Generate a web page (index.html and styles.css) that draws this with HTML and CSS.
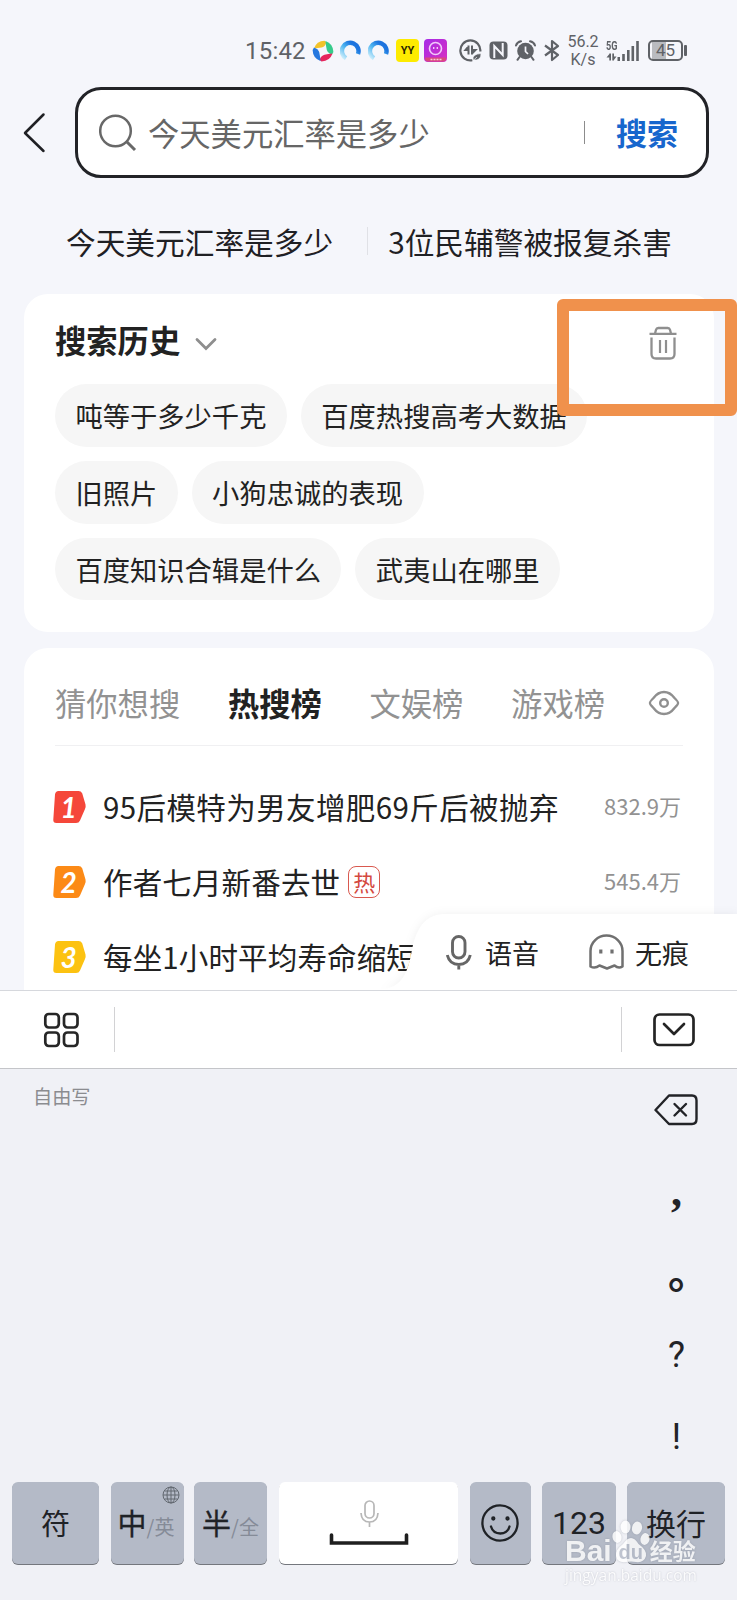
FILE: index.html
```html
<!DOCTYPE html>
<html lang="zh-CN">
<head>
<meta charset="utf-8">
<title>搜索</title>
<link rel="stylesheet" href="styles.css">
</head>
<body>
<div class="screen">
  <header class="status">
    <span class="clock">15:42</span>
    <svg class="s-swirl" width="22" height="22" viewBox="0 0 22 22">
      <path d="M2 8.500Q4.500 1 12.500 .800L14.500 2.200Q13 7 9.500 7.500T2 8.500Z" fill="#f3c32a"/>
      <path d="M13.500 1Q21 3.500 21.400 12L20 14.500Q15.500 13 14.700 9.500T13.500 1Z" fill="#36cb8b"/>
      <path d="M20.500 13.500Q18 21 9.500 21.400L7.500 20Q9 15.500 12.500 14.700T20.500 13.500Z" fill="#e5265c"/>
      <path d="M8.500 21Q1 18.500 .600 10L2 7.500Q6.500 9 7.300 12.500T8.500 21Z" fill="#2578df"/>
    </svg>
    <svg class="s-ring" width="21" height="21" viewBox="0 0 21 21">
      <defs><linearGradient id="ring" x1="0" y1="1" x2="1" y2="0"><stop offset="0" stop-color="#d5f1fc"/><stop offset=".45" stop-color="#4db4f0"/><stop offset=".75" stop-color="#1d76e0"/><stop offset="1" stop-color="#1d6fdc"/></linearGradient></defs>
      <path d="M6 18.200A8.300 8.300 0 1 1 18 14" fill="none" stroke="url(#ring)" stroke-width="4.500"/>
    </svg>
    <svg class="s-ring" width="21" height="21" viewBox="0 0 21 21"><path d="M6 18.200A8.300 8.300 0 1 1 18 14" fill="none" stroke="url(#ring)" stroke-width="4.500"/></svg>
    <span class="yy">YY</span>
    <svg class="s-app" width="23" height="23" viewBox="0 0 23 23">
      <defs><linearGradient id="app" x1="0" y1="0" x2="1" y2="1"><stop offset="0" stop-color="#a52be8"/><stop offset="1" stop-color="#d92fc0"/></linearGradient></defs>
      <rect width="23" height="23" rx="4" fill="url(#app)"/>
      <path d="M1 18.500H22V19Q22 22.500 19 22.500H4Q1 22.500 1 19Z" fill="#d84a7d"/>
      <path d="M6.500 20.500H18" stroke="#f6c9d9" stroke-width="1.500" stroke-dasharray="2 1"/>
      <circle cx="11.500" cy="9.500" r="6" fill="none" stroke="#f2c9fb" stroke-width="1.600"/>
      <path d="M9.700 8V10M13.300 8V10" stroke="#f2c9fb" stroke-width="1.400"/>
    </svg>
    <svg class="s-data" width="23" height="23" viewBox="0 0 23 23">
      <path d="M21.300 12.500A10 10 0 1 0 13.500 21.200" fill="none" stroke="#5f6267" stroke-width="2.200"/>
      <path d="M9.500 6.500V15.500M9.500 7.500L6.500 11H9.500M13 15.500V6.500M13 14.500L16.500 11H13" stroke="#5f6267" stroke-width="2" fill="#5f6267"/>
      <path d="M14 21Q13 15 22 14.500Q22.500 22 14 21ZM13 22.500L18 18" fill="#5f6267" stroke="#f5f6fb" stroke-width=".7"/>
    </svg>
    <svg class="s-nfc" width="19" height="19" viewBox="0 0 19 19">
      <rect x=".5" y=".5" width="18" height="18" rx="4" fill="#5f6267"/>
      <path d="M5.300 17V5L13.700 14V2" fill="none" stroke="#f5f6fb" stroke-width="2"/>
    </svg>
    <svg class="s-alarm" width="21" height="21" viewBox="0 0 21 21">
      <circle cx="10.500" cy="11" r="8.300" fill="#5f6267"/>
      <path d="M1 5.500Q2 2 6 1.300M20 5.500Q19 2 15 1.300M4.500 17L2.500 19.800M16.500 17L18.500 19.800" stroke="#5f6267" stroke-width="2" stroke-linecap="round" fill="none"/>
      <path d="M10.500 6.500V11.500L13 14" fill="none" stroke="#f5f6fb" stroke-width="1.700"/>
    </svg>
    <svg class="s-bt" width="17" height="23" viewBox="0 0 17 23" fill="none" stroke="#5f6267" stroke-width="2.200" stroke-linejoin="round">
      <path d="M2 6.500L15 16L9 21V2L15 7L2 16.500"/>
    </svg>
    <span class="speed"><span>56.2</span><span>K/s</span></span>
    <span class="net"><span class="net-label">5G</span>
      <svg width="34" height="22" viewBox="0 0 34 22" fill="#5f6267">
        <path d="M3.300 13.500H5V20.500H3.300ZM.500 17.500L3.800 13.500V17.500ZM6.300 13.500H8V20.500H6.300ZM7.500 20.500V16.500H10.500Z"/>
        <rect x="11.500" y="17" width="2.500" height="4"/><rect x="16.200" y="14" width="2.600" height="7"/><rect x="21" y="10" width="2.600" height="11"/><rect x="25.500" y="6" width="2.600" height="15"/><rect x="30.200" y="1" width="2.600" height="20"/>
      </svg>
    </span>
    <span class="battery"><span class="cell">45</span><span class="tip"></span></span>
  </header>

  <div class="search-row">
    <svg class="back" width="24" height="42" viewBox="0 0 24 42" fill="none" stroke="#1f2024" stroke-width="2.500" stroke-linecap="round" stroke-linejoin="round"><path d="M21.500 2.500L3 21L21.500 39"/></svg>
    <div class="search-box">
      <svg class="lens" width="38" height="38" viewBox="0 0 38 38" fill="none" stroke="#686868" stroke-width="2.500"><circle cx="16.500" cy="17" r="15.300"/><path d="M27.500 27.500L36 36" stroke-width="3"/></svg>
      <span class="query">今天美元汇率是多少</span>
      <span class="bar"></span>
      <span class="go">搜索</span>
    </div>
  </div>

  <div class="hints">
    <span>今天美元汇率是多少</span>
    <i class="hint-sep"></i>
    <span>3位民辅警被报复杀害</span>
  </div>

  <section class="card history">
    <div class="history-head">
      <h2>搜索历史</h2>
      <svg class="chev" width="22" height="14" viewBox="0 0 22 14" fill="none" stroke="#8e8e8e" stroke-width="2.800" stroke-linecap="round"><path d="M2 2.500L11 11.500L20 2.500"/></svg>
      <svg class="trash" width="28" height="34" viewBox="0 0 28 34" fill="none" stroke="#8f8f8f" stroke-width="2.300"><path d="M.500 7.800H27.500M6 7.500L7 3.800Q7.500 2 9.300 2H18.700Q20.500 2 21 3.800L22 7.500M2.500 11.500V28Q2.500 32.500 7 32.500H21Q25.500 32.500 25.500 28V11.500"/><path d="M11 14V27M17 14V27" stroke-width="2.200"/></svg>
    </div>
    <div class="chips">
      <span class="chip">吨等于多少千克</span><span class="chip">百度热搜高考大数据</span>
      <span class="chip">旧照片</span><span class="chip">小狗忠诚的表现</span>
      <span class="chip">百度知识合辑是什么</span><span class="chip">武夷山在哪里</span>
    </div>
    <div class="highlight"></div>
  </section>

  <section class="card board">
    <nav class="tabs">
      <span>猜你想搜</span><span class="on">热搜榜</span><span>文娱榜</span><span>游戏榜</span>
      <svg width="32" height="26" viewBox="0 0 32 26" fill="none" stroke="#8f8f8f" stroke-width="2.400"><path d="M2 13Q1.500 12 5.500 8Q10 2 16 2T26.500 8Q30.500 12 30 13Q30.500 14 26.500 18Q22 24 16 24T5.500 18Q1.500 14 2 13Z"/><circle cx="16" cy="13" r="3.800"/></svg>
    </nav>
    <ol class="ranks">
      <li>
        <span class="no"><svg width="34" height="32" viewBox="0 0 34 32"><path d="M5.500 0H25.500Q28 0 29.200 2.200L32.500 13.500Q33 16 32 18L27 29.500Q26 32 23 32H3.500Q0 32 .300 28.500L2 3.500Q2.500 0 5.500 0Z" fill="#f5473a"/></svg><b>1</b></span>
        <span class="topic first">95后模特为男友增肥69斤后被抛弃</span><span class="count">832.9万</span>
      </li>
      <li>
        <span class="no"><svg width="34" height="32" viewBox="0 0 34 32"><path d="M5.500 0H25.500Q28 0 29.200 2.200L32.500 13.500Q33 16 32 18L27 29.500Q26 32 23 32H3.500Q0 32 .300 28.500L2 3.500Q2.500 0 5.500 0Z" fill="#fc8a16"/></svg><b>2</b></span>
        <span class="topic">作者七月新番去世</span><span class="hot">热</span><span class="count">545.4万</span>
      </li>
      <li>
        <span class="no"><svg width="34" height="32" viewBox="0 0 34 32"><path d="M5.500 0H25.500Q28 0 29.200 2.200L32.500 13.500Q33 16 32 18L27 29.500Q26 32 23 32H3.500Q0 32 .300 28.500L2 3.500Q2.500 0 5.500 0Z" fill="#fcc211"/></svg><b>3</b></span>
        <span class="topic">每坐1小时平均寿命缩短</span>
      </li>
    </ol>
  </section>

  <div class="float">
    <svg class="float-bg" width="357" height="86" viewBox="0 0 357 86"><path d="M0 86C24 84 28 66 32 46C37 20 48 10 66 10H357V86Z" fill="#fff"/></svg>
    <svg class="mic" width="26" height="35" viewBox="0 0 26 35" fill="none" stroke="#666" stroke-width="2.900"><rect x="6.500" y="1.500" width="12.500" height="21.500" rx="6.250"/><path d="M1.300 20Q3.500 29.500 12.800 29.500T24.300 20M12.800 29.500V34.500"/></svg>
    <span class="float-voice">语音</span>
    <svg class="ghost" width="35" height="36" viewBox="0 0 35 36" fill="none" stroke="#707070" stroke-width="2.500" stroke-linejoin="round"><path d="M1.500 32.500V17A16 15.500 0 0 1 33.500 17V32.500Q29.500 35 25.500 31.500L18 34.500L10.500 31.500Q6 35 1.500 32.500Z"/><path d="M11.800 15.500V19.500M23 15.500V19.500" stroke-width="3.200"/></svg>
    <span>无痕</span>
  </div>

  <div class="toolbar">
    <svg class="grid" width="36" height="36" viewBox="0 0 36 36" fill="none" stroke="#262626" stroke-width="2.700"><rect x="2.300" y="2" width="13.500" height="13.500" rx="3.500"/><rect x="21" y="2" width="13.500" height="13.500" rx="3.500"/><rect x="2.300" y="20.500" width="13.500" height="13.500" rx="3.500"/><rect x="21" y="20.500" width="13.500" height="13.500" rx="3.500"/></svg>
    <i class="tool-sep left"></i>
    <i class="tool-sep right"></i>
    <svg class="fold" width="42" height="34" viewBox="0 0 42 34" fill="none" stroke="#242424" stroke-width="2.700" stroke-linecap="round" stroke-linejoin="round"><rect x="1.500" y="1.500" width="39" height="30.500" rx="5"/><path d="M11 11L21 21L31 11"/></svg>
  </div>

  <div class="keyboard">
    <div class="writing">
      <span class="mode">自由写</span>
      <div class="side">
        <svg width="45" height="32" viewBox="0 0 45 32" fill="none" stroke="#222327" stroke-width="2.400" stroke-linecap="round" stroke-linejoin="round"><path d="M15 1.500H38Q42.500 1.500 42.500 6.500V25Q42.500 30 38 30H15L1.500 16Z"/><path d="M20.500 10L32 21.500M32 10L20.500 21.500"/></svg>
        <span class="mark comma">,</span>
        <span class="mark stop">。</span>
        <span class="mark ask">?</span>
        <span class="mark bang">!</span>
      </div>
    </div>
    <div class="keys">
      <span class="key sym">符</span>
      <span class="key lang">中<small>/英</small>
        <svg class="globe" width="18" height="18" viewBox="0 0 18 18" fill="none" stroke="#626870" stroke-width="1"><circle cx="9" cy="9" r="8"/><ellipse cx="9" cy="9" rx="4" ry="8"/><path d="M9 1V17M1 9H17M2.500 5H15.500M2.500 13H15.500"/></svg>
      </span>
      <span class="key width">半<small>/全</small></span>
      <span class="key space">
        <svg width="80" height="47" viewBox="0 0 80 47" fill="none"><rect x="36" y="1" width="9" height="17" rx="4.500" stroke="#b7b7b7" stroke-width="1.700"/><path d="M32 13Q32.500 22 40.500 22T49 13M40.500 22V27" stroke="#b7b7b7" stroke-width="1.700"/><path d="M2.500 35V43H77.500V35" stroke="#1f1f1f" stroke-width="3.600" stroke-linecap="round"/></svg>
      </span>
      <span class="key smile">
        <svg width="39" height="39" viewBox="0 0 39 39" fill="none" stroke="#1f2226" stroke-width="2.300"><circle cx="19" cy="19" r="17.600"/><path d="M10 22.500Q12 29.500 19.300 29.500T28.500 22.500" stroke-linecap="round"/><circle cx="12.300" cy="14.500" r="1" /><circle cx="26.500" cy="14.500" r="1"/></svg>
      </span>
      <span class="key num">123</span>
      <span class="key enter">换行</span>
    </div>
  </div>

  <div class="watermark">
    <div class="brand"><span>Bai</span>
      <span class="paw"><svg width="38" height="43" viewBox="0 0 38 43" fill="#fff"><ellipse cx="5" cy="17" rx="4.500" ry="6" transform="rotate(-12 5 17)"/><ellipse cx="13.500" cy="7" rx="5" ry="6.500"/><ellipse cx="25" cy="8" rx="5" ry="6.500" transform="rotate(12 25 8)"/><ellipse cx="33" cy="19" rx="4.500" ry="6" transform="rotate(12 33 19)"/><path d="M19 18Q23 18 26.500 24Q35 30 34 36Q32 43 24 42Q19 41 14 42Q5 43 4 36Q3 30 11 24Q15 18 19 18Z"/></svg><em>du</em></span>
      <span class="jy">经验</span></div>
    <div class="site">jingyan.baidu.com</div>
  </div>
</div>
</body>
</html>
```
FILE: styles.css
```css
* { box-sizing: border-box; }
body { margin: 0; background: #f5f6fb; }
.screen {
  position: relative;
  display: flex;
  flex-direction: column;
  width: 737px;
  height: 1600px;
  overflow: hidden;
  background: #f5f6fb;
  color: #1f2024;
  font-family: "Noto Sans CJK SC", sans-serif;
}
svg { display: block; flex: none; }
span { white-space: nowrap; }

/* status bar */
.status {
  display: flex;
  align-items: center;
  height: 87px;
  padding: 14px 0 0 245px;
  flex: none;
  color: #5f6267;
  font-family: Roboto, sans-serif;
}
.clock { width: 60px; font-size: 24px; letter-spacing: .2px; }
.s-swirl { margin-left: 7px; }
.s-ring { margin-left: 6px; }
.s-ring + .s-ring { margin-left: 7px; }
.yy {
  width: 23px; height: 23px; margin-left: 7px;
  border-radius: 4px; background: #fdeb00; color: #2b2600;
  font: bold 11px/23px Roboto, sans-serif; text-align: center;
}
.s-app { margin-left: 5px; }
.s-data { margin-left: 12px; }
.s-nfc { margin-left: 7px; }
.s-alarm { margin-left: 7px; }
.s-bt { margin-left: 7px; }
.speed {
  display: flex; flex-direction: column; align-items: center;
  width: 32px; margin: 1px 0 0 7px;
  font-size: 16px; line-height: 18px;
}
.net { position: relative; margin-left: 7px; }
.net-label { position: absolute; left: 0; top: 0; font: bold 12px/12px Roboto, sans-serif; transform: scaleX(.76); transform-origin: 0 0; }
.battery { display: flex; align-items: center; margin-left: 8px; }
.cell {
  width: 35px; height: 21px; border: 2px solid #5f6267; border-radius: 5px;
  background: linear-gradient(90deg, #b9bbc0 0 14px, transparent 14px) 2px 0 / 31px 17px no-repeat;
  font-size: 17px; line-height: 17px; text-align: center;
}
.tip { width: 3px; height: 11px; margin-left: 1px; border-radius: 1px; background: #5f6267; }

/* search field */
.search-row { display: flex; align-items: center; flex: none; height: 91px; padding: 0 28px 0 22px; }
.search-box {
  display: flex; align-items: center; flex: 1;
  height: 91px; margin-left: 29px; padding: 0 27px 0 21px;
  border: 3px solid #222327; border-radius: 26px; background: #fff;
}
.query { margin-left: 11px; font-size: 31.300px; line-height: 40px; color: #666; margin-top: 1px; }
.bar { width: 1px; height: 23px; margin-left: auto; background: #8c8c8c; }
.go { margin: -2px 1px 0 31px; font-size: 31px; font-weight: 700; line-height: 40px; color: #1766cd; }

.hints { display: flex; align-items: center; flex: none; height: 116px; padding: 9px 0 0 66px; font-size: 29.700px; line-height: 40px; }
.hints span { margin-top: 2px; }
.hint-sep { width: 1px; height: 28px; margin: 0 20px 0 34px; background: #e0e1e6; }

/* cards */
.card { position: relative; flex: none; width: 690px; margin-left: 24px; background: #fff; }
.history { height: 338px; border-radius: 24px; padding: 24px 31px 0; }
.history-head { display: flex; align-items: center; height: 44px; margin-bottom: 22px; }
h2 { margin: 0; font-size: 31.300px; font-weight: 700; line-height: 40px; color: #222; }
.chev { margin: 7px 0 0 15px; }
.trash { margin: 6px 6px 0 auto; }
.chips { display: flex; flex-wrap: wrap; gap: 14px; }
.chip {
  height: 62.800px; padding: 0 20.400px; border-radius: 32px; background: #f6f6f6;
  color: #222; font-size: 27.300px; line-height: 63px;
}
.highlight {
  position: absolute; left: 533px; top: 5px; width: 180px; height: 117px;
  border: 12px solid #f0914c; border-radius: 6px;
}
.board { height: 342px; margin-top: 16px; padding: 0 31px; border-radius: 24px 24px 0 0; color: #222; }
.tabs { display: flex; align-items: center; height: 98px; padding-top: 12px; border-bottom: 1px solid #f0f0f2; font-size: 31.300px; line-height: 40px; color: #929292; }
.tabs span { margin: 1px 47.700px 0 0; }
.tabs .on { font-weight: 700; color: #222; }
.tabs svg { margin-left: -5px; }
.ranks { list-style: none; margin: 0; padding: 23px 0 0; }
.ranks li { display: flex; align-items: center; height: 75px; }
.no { position: relative; width: 34px; margin-left: -2px; }
.no b { position: absolute; inset: 0 3px 0 0; font: italic 700 28px/32px Lato, sans-serif; text-align: center; color: #fff; }
.topic { margin: -2px 0 0 16px; font-size: 29.500px; line-height: 40px; letter-spacing: .15px; }
.first { letter-spacing: .4px; }
.hot { width: 32px; height: 32px; margin-left: 8px; border: 1px solid #d9594f; border-radius: 8px; color: #d4493f; font-size: 22px; line-height: 28px; text-align: center; }
.count { margin: -3px 2px 0 auto; font-size: 22px; color: #929292; }

/* voice and incognito shortcuts lying over the list */
.float { position: absolute; left: 380px; top: 904px; display: flex; align-items: center; width: 357px; height: 86px; padding: 10px 0 0 66px; font-size: 27px; line-height: 36px; color: #222; }
.float-bg { position: absolute; left: 0; top: 0; filter: drop-shadow(0 0 5px rgba(0,0,0,.06)); }
.float > *:not(.float-bg) { position: relative; }
.float span { margin-top: 1px; }
.float-voice { margin-left: 13px; }
.ghost { margin: 0 11px 0 50px; }

/* keyboard */
.toolbar { position: relative; display: flex; align-items: center; flex: none; height: 79px; padding: 0 42px 0 43px; border-top: 1px solid #d6d8dd; border-bottom: 1px solid #c4c5c9; background: #fff; }
.tool-sep { width: 1px; height: 45px; background: #d2d2d4; }
.left { margin-left: 35px; }
.right { margin-left: auto; margin-right: 31px; }
.keyboard { flex: 1; background: #f0f1f6; }
.writing { display: flex; justify-content: space-between; height: 413px; padding: 14px 38px 0 33px; }
.mode { font-size: 19.200px; line-height: 27px; color: #8b8c90; }
.side { display: flex; flex-direction: column; align-items: center; width: 45px; padding-top: 11px; color: #222327; }
.mark { display: block; width: 36px; text-align: center; line-height: 40px; }
.comma { margin-top: 46px; font: bold 44px/40px "Liberation Serif", serif; }
.stop { margin: 38px 0 0 19px; font-size: 42px; font-weight: 700; }
.ask { margin-top: 45px; font: 36px/40px Roboto, sans-serif; }
.bang { margin-top: 42px; font: 36px/40px Roboto, sans-serif; }
.keys { display: flex; height: 83px; padding-left: 12px; }
.key { position: relative; display: flex; align-items: center; justify-content: center; height: 82px; border-radius: 6px; background: #b4bac7; box-shadow: 0 1px 0 #74777d; color: #1f2226; font-size: 29px; padding-bottom: 3px; }
.sym { width: 87px; margin-right: 12px; }
.lang { width: 73px; margin-right: 10px; padding-right: 3px; -webkit-text-stroke: .3px currentColor; }
.width { width: 73px; margin-right: 12px; -webkit-text-stroke: .3px currentColor; }
.space { width: 179px; margin-right: 12px; padding-bottom: 0; background: #fff; }
.smile { width: 61px; margin-right: 11px; padding-bottom: 0; }
.num { width: 74px; margin-right: 11px; padding-bottom: 1px; font-family: Roboto, sans-serif; font-size: 32px; }
.enter { width: 98px; font-size: 30px; }
.key small { margin-top: 9px; font-size: 20px; color: #858b97; -webkit-text-stroke: 0; }
.globe { position: absolute; right: 4px; top: 4px; }

.watermark { position: absolute; left: 565px; top: 1520px; width: 134px; color: #fff; opacity: .8; }
.brand { display: flex; align-items: flex-end; height: 43px; font: bold 30px/25px "Liberation Sans", sans-serif; filter: drop-shadow(0 0 1px rgba(120,125,140,.5)); }
.paw { position: relative; }
.paw em { position: absolute; left: 0; right: 0; bottom: -1px; text-align: center; color: #b4bac7; font: bold 20px/24px "Liberation Sans", sans-serif; }
.jy { font: bold 23px/25px "Noto Sans CJK SC", sans-serif; }
.site { font: 15.500px/20px "Open Sans", sans-serif; margin-top: 2px; text-shadow: 0 0 2px #b0b3bd; }
```
